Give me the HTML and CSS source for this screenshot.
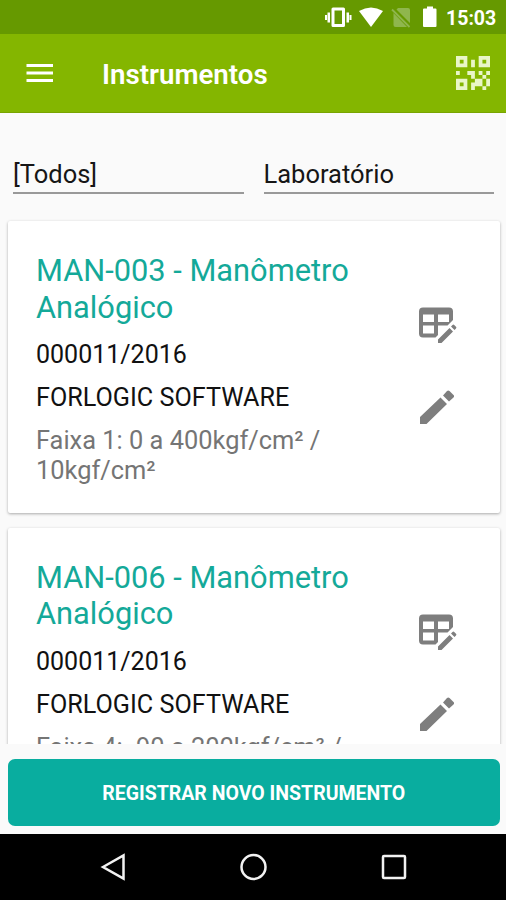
FILE: index.html
```html
<!DOCTYPE html>
<html lang="pt-BR">
<head>
<meta charset="utf-8">
<title>Instrumentos</title>
<link rel="stylesheet" href="styles.css">
</head>
<body>
<svg class="defs" width="0" height="0">
  <symbol id="table-edit" viewBox="0 0 38 38">
    <path fill-rule="evenodd" d="M4 .5H30a4 4 0 0 1 4 4V13L28.500 18.500H19V28L16.500 30.500H4a4 4 0 0 1-4-4V4.500a4 4 0 0 1 4-4ZM4 7.500V15H15V7.500ZM19 7.500V15H30V7.500ZM4 18.500V26.500H15V18.500Z"/>
    <path d="M19 32.500 30.500 21 34 24.500 22.500 36H19ZM32 19.500 33.500 18a1.200 1.200 0 0 1 1.700 0L37 19.800a1.200 1.200 0 0 1 0 1.700L35.500 23Z"/>
  </symbol>
  <symbol id="pencil" viewBox="0 0 34 34">
    <path d="M0 27 20.500 7.500 27 14 6.500 34H0ZM23 5.500 27 1a1.800 1.800 0 0 1 2.500 0L33.500 5a1.800 1.800 0 0 1 0 2.500L29 11.500Z"/>
  </symbol>
</svg>
<div class="screen">
  <div class="status">
    <svg class="status-icons" width="118" height="34" viewBox="0 0 118 34" fill="#fff">
      <path fill-rule="evenodd" d="M11 7.500H21.500a1.500 1.500 0 0 1 1.500 1.500V25.500a1.500 1.500 0 0 1-1.500 1.500H11a1.500 1.500 0 0 1-1.500-1.500V9A1.500 1.500 0 0 1 11 7.500ZM12.500 10.500V24H20V10.500Z"/>
      <path d="M5.500 12.500H8V22.500H5.500ZM3 15H5V20H3ZM24.500 12.500H27V22.500H24.500ZM27.500 15H29.500V20H27.500Z"/>
      <path d="M37 11Q49 4 61 11L49 27Z"/>
      <path fill="#8fb64d" d="M76 8H86a2 2 0 0 1 2 2V23L74.500 9.500ZM71.500 13 85 27H73.500a2 2 0 0 1-2-2Z"/>
      <path d="M70 9.500 87.500 27" stroke="#8fb64d" stroke-width="1.800"/>
      <path d="M105 6.500H111V8.500H113.500a1 1 0 0 1 1 1V26a1 1 0 0 1-1 1H102a1 1 0 0 1-1-1V9.500a1 1 0 0 1 1-1H105Z"/>
    </svg>
    <span class="clock">15:03</span>
  </div>
  <header class="appbar">
    <svg width="28" height="20" viewBox="0 0 28 20" fill="#fff"><path d="M.5 1H27V4H.5ZM.5 8.500H27V11.500H.5ZM.5 16H27V19H.5Z"/></svg>
    <h1 class="heading">Instrumentos</h1>
    <svg width="34" height="34" viewBox="0 0 9 9" fill="#e9f6c8" fill-rule="evenodd"><path d="M0 0H3V3H0ZM1 1V2H2V1ZM6 0H9V3H6ZM7 1V2H8V1ZM0 6H3V9H0ZM1 7V8H2V7ZM4 1H5V3H4ZM0 4H1V5H0ZM3 4H5V6H4V5H3ZM6 4H7V5H6ZM8 4H9V5H8ZM7 5H8V6H7ZM6 6H7V8H5V9H4V7H5V6H6ZM8 6H9V8H8ZM7 8H8V9H7Z"/></svg>
  </header>
  <div class="filters">
    <div class="field">[Todos]</div>
    <div class="field">Laboratório</div>
  </div>
  <main class="list">
    <article class="card">
      <div class="info">
        <h2 class="name">MAN-003 - Manômetro Analógico</h2>
        <p class="line">000011/2016</p>
        <p class="line owner">FORLOGIC SOFTWARE</p>
        <p class="range">Faixa 1: 0 a 400kgf/cm² / 10kgf/cm²</p>
      </div>
      <div class="actions">
        <svg width="38" height="38"><use href="#table-edit"/></svg>
        <svg width="34" height="34"><use href="#pencil"/></svg>
      </div>
    </article>
    <article class="card">
      <div class="info">
        <h2 class="name">MAN-006 - Manômetro Analógico</h2>
        <p class="line">000011/2016</p>
        <p class="line owner">FORLOGIC SOFTWARE</p>
        <p class="range">Faixa 4: -90 a 200kgf/cm² /</p>
      </div>
      <div class="actions">
        <svg width="38" height="38"><use href="#table-edit"/></svg>
        <svg width="34" height="34"><use href="#pencil"/></svg>
      </div>
    </article>
  </main>
  <div class="footer"><button class="register">REGISTRAR NOVO INSTRUMENTO</button></div>
  <nav class="navbar">
    <svg width="28" height="30" viewBox="0 0 28 30"><path d="M4 15 24.500 3.500V26.500Z"/></svg>
    <svg width="28" height="30" viewBox="0 0 28 30"><circle cx="14.500" cy="15" r="12"/></svg>
    <svg width="28" height="30" viewBox="0 0 28 30"><rect x="4" y="4" width="22" height="22" rx="1"/></svg>
  </nav>
</div>
</body>
</html>
```
FILE: styles.css
```css
* { box-sizing: border-box; }
body { margin: 0; font-family: Roboto, sans-serif; }
h1, h2, p { margin: 0; font-weight: 400; }
svg { display: block; flex: none; }
.defs { position: absolute; }
.screen { width: 506px; height: 900px; display: flex; flex-direction: column; background: #fafafa; overflow: hidden; }
.status { height: 34px; flex: none; background: #669900; display: flex; justify-content: flex-end; align-items: center; padding-right: 10px; color: #fff; }
.clock { width: 50px; margin-left: 6px; font-size: 19.500px; font-weight: 700; line-height: 34px; padding-top: 3px; white-space: nowrap; }
.appbar { height: 79px; flex: none; background: #84b600; border-bottom: 1px solid #78a400; display: flex; align-items: center; padding: 0 16px 0 26px; color: #fff; }
.heading { flex: 1; margin-left: 48px; padding-top: 4px; font-size: 27.700px; font-weight: 600; line-height: 36px; }
.filters { flex: none; height: 81px; display: flex; gap: 20px; padding: 40px 12px 0 13px; }
.field { flex: 1; height: 41px; border-bottom: 2px solid #999; font-size: 25.500px; line-height: 42px; color: #161616; }
.list { flex: none; height: 550px; padding: 27px 6px 0 7.500px; overflow: hidden; }
.card { height: 292px; margin-bottom: 14.500px; background: #fff; border-radius: 2px; box-shadow: 0 1px 3px rgba(0,0,0,.32); display: flex; justify-content: space-between; padding: 32px 43.500px 0 28.500px; }
.info { width: 325px; }
.name { font-size: 30.800px; line-height: 36.500px; color: #14a999; }
.line { font-size: 25px; line-height: 30px; margin-top: 13px; color: #111; }
.name + .line { margin-top: 14px; }
.owner { font-size: 25.200px; }
.range { font-size: 25.400px; line-height: 30px; margin-top: 12px; color: #757575; }
.actions { width: 38px; padding-top: 54px; display: flex; flex-direction: column; gap: 45px; fill: #7e7e7e; }
.actions svg + svg { margin-left: 1.500px; }
.footer { flex: none; height: 90px; padding: 15px 6px 0 7.500px; }
.register { display: block; width: 100%; height: 67px; border: 0; border-radius: 7px; background: #09ad9f; color: #fff; font: 700 19.500px/67px Roboto, sans-serif; padding: 1px 0 0; }
.navbar { flex: none; height: 66px; background: #000; display: flex; justify-content: center; gap: 112px; padding-top: 18px; fill: none; stroke: #f2f2f2; stroke-width: 2.500; }
```
